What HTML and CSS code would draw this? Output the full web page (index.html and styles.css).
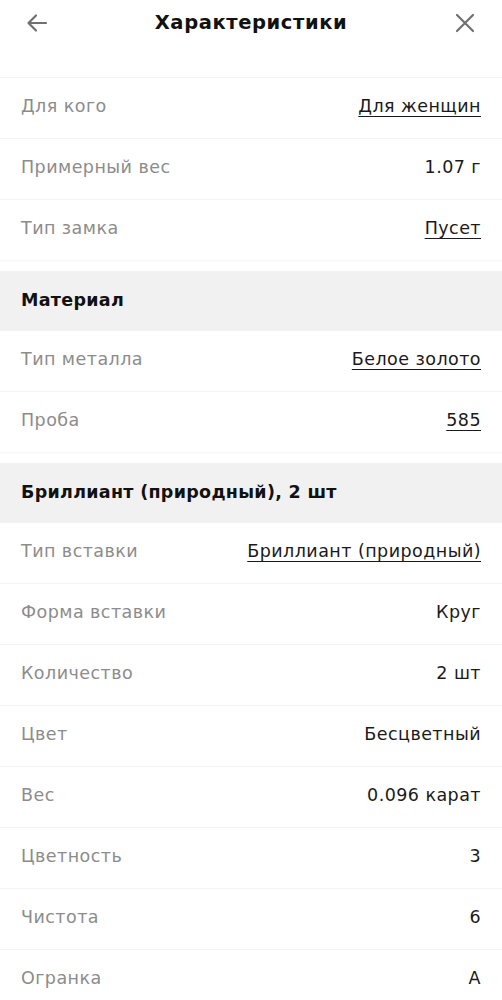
FILE: index.html
```html
<!DOCTYPE html>
<html lang="ru">
<head>
<meta charset="utf-8">
<link rel="stylesheet" href="styles.css">
</head>
<body>
<div class="page">
  <header class="header">
    <div class="bar">
      <button class="icon-btn" aria-label="Назад">
        <svg width="24" height="24" viewBox="0 0 24 24"><path d="M21 12H4M11 4.5L3.5 12L11 19.5" fill="none" stroke="#707070" stroke-width="2.2" stroke-linecap="round" stroke-linejoin="round"/></svg>
      </button>
      <h1 class="title">Характеристики</h1>
      <button class="icon-btn" aria-label="Закрыть">
        <svg width="24" height="24" viewBox="0 0 24 24"><path d="M4 4L20 20M20 4L4 20" fill="none" stroke="#707070" stroke-width="2.2" stroke-linecap="round"/></svg>
      </button>
    </div>
  </header>

  <section class="group">
    <div class="row"><span class="label">Для кого</span><a class="value link">Для женщин</a></div>
    <div class="row"><span class="label">Примерный вес</span><span class="value">1.07 г</span></div>
    <div class="row"><span class="label">Тип замка</span><a class="value link">Пусет</a></div>
  </section>

  <div class="section-title">Материал</div>
  <section class="group">
    <div class="row"><span class="label">Тип металла</span><a class="value link">Белое золото</a></div>
    <div class="row"><span class="label">Проба</span><a class="value link">585</a></div>
  </section>

  <div class="section-title">Бриллиант (природный), 2 шт</div>
  <section class="group">
    <div class="row"><span class="label">Тип вставки</span><a class="value link">Бриллиант (природный)</a></div>
    <div class="row"><span class="label">Форма вставки</span><span class="value">Круг</span></div>
    <div class="row"><span class="label">Количество</span><span class="value">2 шт</span></div>
    <div class="row"><span class="label">Цвет</span><span class="value">Бесцветный</span></div>
    <div class="row"><span class="label">Вес</span><span class="value">0.096 карат</span></div>
    <div class="row"><span class="label">Цветность</span><span class="value">3</span></div>
    <div class="row"><span class="label">Чистота</span><span class="value">6</span></div>
    <div class="row"><span class="label">Огранка</span><span class="value">A</span></div>
  </section>
</div>
</body>
</html>
```

FILE: styles.css
```css
* { box-sizing: border-box; }
html, body { margin: 0; padding: 0; background: #fff; }
body {
  font-family: "DejaVu Sans", "Noto Sans", sans-serif;
  color: #1a1a1a;
  width: 502px;
  overflow: hidden;
}
.page { display: flex; flex-direction: column; }
.header {
  height: 78px;
  border-bottom: 1px solid #f3f3f3;
}
.bar {
  height: 45px;
  display: flex;
  align-items: center;
  justify-content: space-between;
  padding: 0 24px 0 24px;
}
.icon-btn {
  border: 0;
  background: none;
  padding: 0;
  width: 26px;
  height: 26px;
  display: flex;
  align-items: center;
  justify-content: center;
}
.title {
  margin: 0;
  font-size: 19.5px;
  font-weight: 700;
  letter-spacing: 0.6px;
  color: #111;
}
.group { display: flex; flex-direction: column; padding-bottom: 10px; }
.row {
  height: 61px;
  border-bottom: 1px solid #f3f3f3;
  display: flex;
  align-items: center;
  justify-content: space-between;
  padding: 0 21px 4px 21px;
  font-size: 17.5px;
  letter-spacing: 0.45px;
}
.group .row:last-child { border-bottom: 1px solid #f7f7f7; }
.label { color: #8c8c8c; }
.value { color: #1a1a1a; }
.link {
  text-decoration: underline;
  text-underline-offset: 4px;
  text-decoration-thickness: 1px;
}
.section-title {
  height: 60px;
  background: #f1f1f1;
  display: flex;
  align-items: center;
  padding: 0 21px 2px 21px;
  font-size: 17.5px;
  letter-spacing: 0.3px;
  font-weight: 700;
  color: #111;
}
```
